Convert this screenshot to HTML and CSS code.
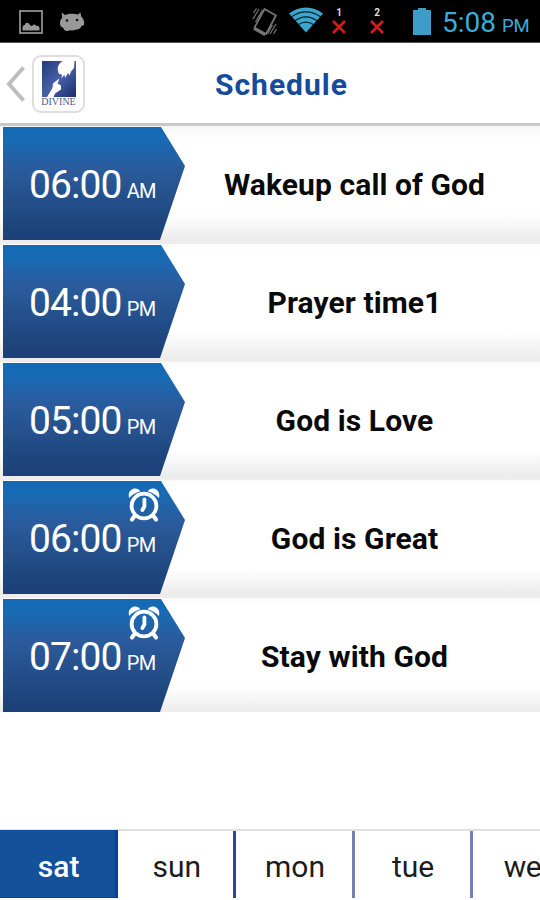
FILE: index.html
```html
<!DOCTYPE html>
<html lang="en">
<head>
    <meta charset="UTF-8">
    <meta name="viewport" content="width=device-width, initial-scale=1.0">
    <title>Schedule</title>
    <link rel="stylesheet" href="styles.css">
</head>
<body>
    <svg width="0" height="0" class="defs">
        <symbol id="alarm" viewBox="0 0 32 34">
            <g fill="none" stroke="#fff" stroke-linecap="round">
                <circle cx="16" cy="18" r="12.4" stroke-width="3.8"/>
                <path d="M16.4 11.500v7l-2 3.500" stroke-width="3.8"/>
                <path d="M6.500 28l-2.500 3.500M25.500 28l2.500 3.500" stroke-width="4"/>
            </g>
            <path d="M1.200 10C-.8 4 3.500.4 7 .4c2.500 0 4.500 1 5.300 2.900C7.500 4.500 4 7 1.200 10zM30.800 10C32.800 4 28.500.4 25 .4c-2.500 0-4.500 1-5.300 2.900C24.500 4.500 28 7 30.800 10z" fill="#fff"/>
        </symbol>
    </svg>

    <div class="status-bar">
        <div class="status-left">
            <svg width="24" height="24" viewBox="0 0 24 24">
                <rect x="1" y="1" width="22" height="22" fill="none" stroke="#989898" stroke-width="1.700"/>
                <path d="M3.500 20.500v-3c0-2 1.500-2.500 2.500-2.500 0-2.500 3.500-3.500 5 0 1.500 1.500 2 1 3 0s3-.5 3 1c2-.5 3.500.5 3.500 2v2.500z" fill="#989898"/>
            </svg>
            <svg width="26" height="20" viewBox="0 0 26 20">
                <path d="M2.500.5l3.500 2.500c4-1.500 9-1.500 13-.5L21.500.5l.7 4c2.500 2 3.500 5.500 2.800 8.500l-2.500 1c-1 2.500-3 4-5.500 3.500-2 1-4 1-6 .8-4 1.500-6.500 0-6.500-2.300C2 15.500.8 13.500 1 11c0-2.500 1-4 2.300-5.500z" fill="#999"/>
                <circle cx="8" cy="8.500" r="1.300" fill="#111"/>
                <circle cx="18" cy="8" r="1.300" fill="#111"/>
            </svg>
        </div>
        <div class="status-right">
            <svg class="vibrate" width="26" height="30" viewBox="0 0 26 30">
                <path d="M12.500 2l11.500 6.500-10 18.500L2.500 20.500z" fill="none" stroke="#777" stroke-width="1.700" stroke-linejoin="round"/>
                <path d="M2.500 20.500l11.500 6.500-1.800 2L1.200 22.500z" fill="#777"/>
                <path d="M1 12l6-10M1.500 6l3-4.500M3.500 15l7-12M18 27l6-10M21.500 27l3-5M15.500 27l5-9" stroke="#777" stroke-width="1.200"/>
            </svg>
            <svg class="wifi" width="36" height="26" viewBox="0 0 36 26">
                <path d="M1 6.500C11-1.500 25-1.500 35 6.500L18 25.500z" fill="#3ba7cf"/>
                <path d="M3.500 9.800c9-6.700 20-6.700 29 0M7 13.700c7-5 15-5 22 0M10.500 17.500c5-3.200 10-3.200 15 0" fill="none" stroke="#04202b" stroke-width="1.200"/>
            </svg>
            <div class="sim sim-one">
                <span>1</span>
                <svg width="14" height="14" viewBox="0 0 14 14"><path d="M1 1l12 12M13 1l-12 12" stroke="#cf1c1c" stroke-width="2.800"/></svg>
            </div>
            <div class="sim sim-two">
                <span>2</span>
                <svg width="14" height="14" viewBox="0 0 14 14"><path d="M1 1l12 12M13 1l-12 12" stroke="#cf1c1c" stroke-width="2.800"/></svg>
            </div>
            <svg class="battery" width="18" height="27" viewBox="0 0 18 27">
                <path d="M5 0h8v2h5v25H0V2h5z" fill="#3c9ec6"/>
            </svg>
            <div class="clock">5:08 <small>PM</small></div>
        </div>
    </div>

    <header class="header">
        <svg class="back" width="20" height="36" viewBox="0 0 20 36">
            <path d="M17.500 1.500L3 18l14.500 16.500" fill="none" stroke="#bdbdbd" stroke-width="4"/>
        </svg>
        <div class="logo">
            <svg width="34" height="36" viewBox="0 0 34 36">
                <defs>
                    <linearGradient id="logoBg" x1="0" y1="0" x2="1" y2="1">
                        <stop offset="0" stop-color="#25397d"/>
                        <stop offset=".5" stop-color="#4760a8"/>
                        <stop offset="1" stop-color="#1b2d6b"/>
                    </linearGradient>
                </defs>
                <rect width="34" height="36" fill="url(#logoBg)"/>
                <path d="M21 0h11.500l-.5 7-3 3.500-1.500 4-1.500-2.500-3 5-.5-3.500-3 4 .5-4-3-.5-1-3c-1-4 1-8 5-10z" fill="#fff"/>
                <path d="M5 36l5.500-9 .5-4.500 3-2.500 3.500-2.500-2 5 3.500 2v4l-6 4-1.500 3.500z" fill="#fff"/>
            </svg>
            <span class="logo-name">DIVINE</span>
        </div>
        <h1>Schedule</h1>
    </header>

    <main class="schedule">
        <div class="row">
            <div class="time"><span>06:00</span><small>AM</small></div>
            <div class="title">Wakeup call of God</div>
        </div>
        <div class="row">
            <div class="time"><span>04:00</span><small>PM</small></div>
            <div class="title">Prayer time1</div>
        </div>
        <div class="row">
            <div class="time"><span>05:00</span><small>PM</small></div>
            <div class="title">God is Love</div>
        </div>
        <div class="row">
            <div class="time"><svg class="alarm"><use href="#alarm"/></svg><span>06:00</span><small>PM</small></div>
            <div class="title">God is Great</div>
        </div>
        <div class="row">
            <div class="time"><svg class="alarm"><use href="#alarm"/></svg><span>07:00</span><small>PM</small></div>
            <div class="title">Stay with God</div>
        </div>
    </main>

    <nav class="days">
        <div class="day active">sat</div>
        <div class="day">sun</div>
        <div class="day">mon</div>
        <div class="day">tue</div>
        <div class="day last">we</div>
    </nav>
</body>
</html>
```

FILE: styles.css
```css
* {
    box-sizing: border-box;
}
body {
    font-family: Roboto, "Liberation Sans", sans-serif;
    margin: 0;
    height: 900px;
    display: flex;
    flex-direction: column;
    background-color: #fff;
    overflow: hidden;
}
svg {
    display: block;
    flex: none;
}
.defs {
    position: absolute;
}

/* status bar */
.status-bar {
    height: 43px;
    flex: none;
    display: flex;
    justify-content: space-between;
    background-color: #000;
    border-bottom: 1px solid #555;
}
.status-left {
    display: flex;
    gap: 16px;
    padding: 10px 0 0 19px;
}
.status-left svg + svg {
    margin-top: 2px;
}
.status-right {
    display: flex;
    align-items: flex-start;
    width: 288px;
}
.vibrate {
    margin-top: 7px;
}
.wifi {
    margin: 7px 0 0 10px;
}
.sim {
    width: 14px;
    padding-top: 7px;
    color: #ddd;
    font-size: 10px;
    font-weight: 700;
    line-height: 11px;
    text-align: center;
}
.sim svg {
    margin-top: 2px;
}
.sim-one {
    margin-left: 8px;
}
.sim-two {
    margin-left: 24px;
}
.battery {
    margin: 8px 0 0 29px;
}
.clock {
    margin-left: 11px;
    color: #38acdb;
    font-size: 28px;
    line-height: 46px;
    white-space: nowrap;
}
.clock small {
    font-size: 18.500px;
    margin-left: -1px;
}

/* header */
.header {
    height: 83px;
    flex: none;
    display: flex;
    align-items: flex-start;
    border-bottom: 3px solid #c9c9c9;
}
.back {
    margin: 23px 0 0 6px;
}
.logo {
    width: 53px;
    height: 58px;
    margin: 12px 0 0 6px;
    padding-top: 4px;
    display: flex;
    flex-direction: column;
    align-items: center;
    border: 2px solid #dedede;
    border-radius: 9px;
}
.logo-name {
    color: #4e5a87;
    font-family: "Liberation Serif", serif;
    font-size: 10px;
    line-height: 10px;
}
h1 {
    margin: 0 0 0 130px;
    color: #164a9a;
    font-size: 30px;
    font-weight: 700;
    letter-spacing: 1px;
    line-height: 83px;
}

/* schedule list */
.schedule {
    flex: 1;
}
.row {
    height: 118px;
    display: flex;
    border-bottom: 3px solid #ededed;
    padding: 1px 0 1px 3px;
    background: linear-gradient(#fbfbfb, #fff 8px, #fff 88px, #ebebeb);
}
.row:first-child {
    background: linear-gradient(#f5f5f5, #fff 12px, #fff 88px, #ebebeb);
}
.row:last-child {
    height: 114px;
    border-bottom: 0;
    padding-bottom: 0;
}
.time {
    position: relative;
    width: 182px;
    height: 113px;
    flex: none;
    display: flex;
    align-items: baseline;
    padding-left: 26px;
    color: #fff;
    font-size: 39px;
    line-height: 117px;
    letter-spacing: -0.900px;
    background: linear-gradient(#136ab5, #186ab4 14px, #2b5b9c 42px, #1e467d 95px, #1c3f78);
    clip-path: polygon(0 0, 158px 0, 100% 39px, 157px 100%, 0 100%);
}
.time small {
    margin-left: 5px;
    font-size: 20px;
    letter-spacing: -0.600px;
}
.alarm {
    position: absolute;
    left: 125px;
    top: 7px;
    width: 32px;
    height: 34px;
}
.title {
    flex: 1;
    margin-left: -16px;
    color: #0a0a0a;
    font-size: 30px;
    font-weight: 700;
    letter-spacing: 0.100px;
    line-height: 115px;
    text-align: center;
}

/* day picker */
.days {
    height: 71px;
    flex: none;
    display: flex;
    border-top: 2px solid #e0e0e0;
    border-bottom: 2px solid #fff;
}
.day {
    width: 118.200px;
    flex: none;
    padding-left: 2px;
    border-right: 3px solid #7581b5;
    color: #1c1c1c;
    font-size: 30px;
    line-height: 71px;
    text-align: center;
}
.day.active {
    margin-top: -1px;
    color: #fff;
    font-weight: 500;
    line-height: 73px;
    background-color: #15509a;
    border-right-color: #0f3f91;
    border-bottom: 1px solid #0f3f91;
}
.day:nth-child(2) {
    border-right-color: #2d459a;
}
.day.last {
    flex: 1;
    padding-left: 31px;
    border-right: 0;
    letter-spacing: -0.500px;
    text-align: left;
}
```
